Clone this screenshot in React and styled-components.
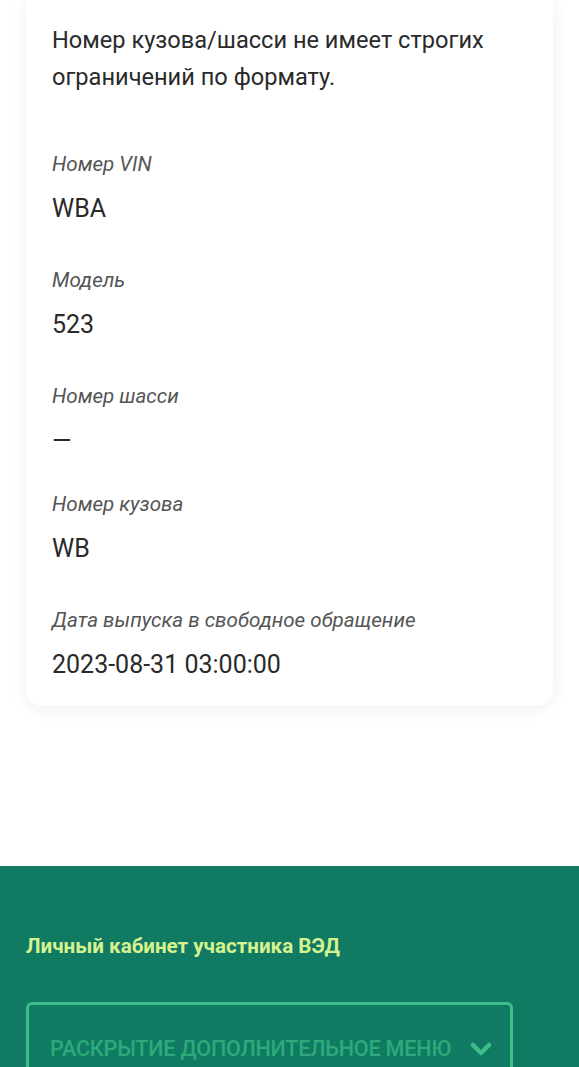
import styled, { createGlobalStyle } from 'styled-components';

const GlobalStyle = createGlobalStyle`
  html, body {
    margin: 0;
    padding: 0;
    background: #ffffff;
  }
  body {
    font-family: Roboto, "Noto Sans", sans-serif;
    color: #2b2b2b;
  }
`;

const Page = styled.div`
  display: flex;
  flex-direction: column;
  min-height: 1067px;
`;

const Content = styled.main`
  background: #ffffff;
  padding: 0 26px 0;
  height: 866px;
  box-sizing: border-box;
`;

const Card = styled.section`
  background: #ffffff;
  border-radius: 0 0 16px 16px;
  box-shadow: 0 2px 18px rgba(0, 0, 0, 0.07);
  padding: 22px 26px 27px;
`;

const Note = styled.p`
  margin: 0 0 55px;
  font-size: 23.6px;
  line-height: 37px;
  color: #2a2a2a;
`;

const Field = styled.div`
  display: flex;
  flex-direction: column;
  gap: 18px;
  margin-bottom: ${(p) => p.$gap || 44}px;
  &:last-child {
    margin-bottom: 0;
  }
`;

const Label = styled.span`
  font-style: italic;
  font-size: 20.6px;
  line-height: 26px;
  color: #555555;
`;

const Value = styled.span`
  font-size: 25px;
  line-height: 28px;
  color: #2a2a2a;
`;

const Footer = styled.footer`
  background: #117a63;
  padding: 66px 26px 0;
  flex: 1;
`;

const FooterTitle = styled.h3`
  margin: 0 0 42px;
  font-size: 20.6px;
  line-height: 28px;
  font-weight: 700;
  color: #d6f28e;
`;

const MenuToggle = styled.button`
  display: flex;
  align-items: center;
  justify-content: space-between;
  width: 487px;
  height: 90px;
  box-sizing: border-box;
  padding: 0 18px 0 21px;
  background: transparent;
  border: 3px solid #3dbd88;
  border-bottom: none;
  border-radius: 6px 6px 0 0;
  font-family: inherit;
  font-size: 21.6px;
  font-weight: 500;
  letter-spacing: -0.2px;
  white-space: nowrap;
  color: #2ea97a;
  text-transform: uppercase;
  cursor: pointer;
`;

const fields = [
  { label: 'Номер VIN', value: 'WBA' },
  { label: 'Модель', value: '523' },
  { label: 'Номер шасси', value: '—', gap: 36 },
  { label: 'Номер кузова', value: 'WB' },
  { label: 'Дата выпуска в свободное обращение', value: '2023-08-31 03:00:00' },
];

export default function App() {
  return (
    <Page>
      <GlobalStyle />
      <Content>
        <Card>
          <Note>Номер кузова/шасси не имеет строгих ограничений по формату.</Note>
          {fields.map((f) => (
            <Field key={f.label} $gap={f.gap}>
              <Label>{f.label}</Label>
              <Value>{f.value}</Value>
            </Field>
          ))}
        </Card>
      </Content>
      <Footer>
        <FooterTitle>Личный кабинет участника ВЭД</FooterTitle>
        <MenuToggle type="button">
          Раскрытие дополнительное меню
          <svg width="22" height="16" viewBox="0 0 22 16" fill="none">
            <path d="M3 4l8 8 8-8" stroke="#3dbd88" strokeWidth="4.5" strokeLinecap="round" strokeLinejoin="round" />
          </svg>
        </MenuToggle>
      </Footer>
    </Page>
  );
}
